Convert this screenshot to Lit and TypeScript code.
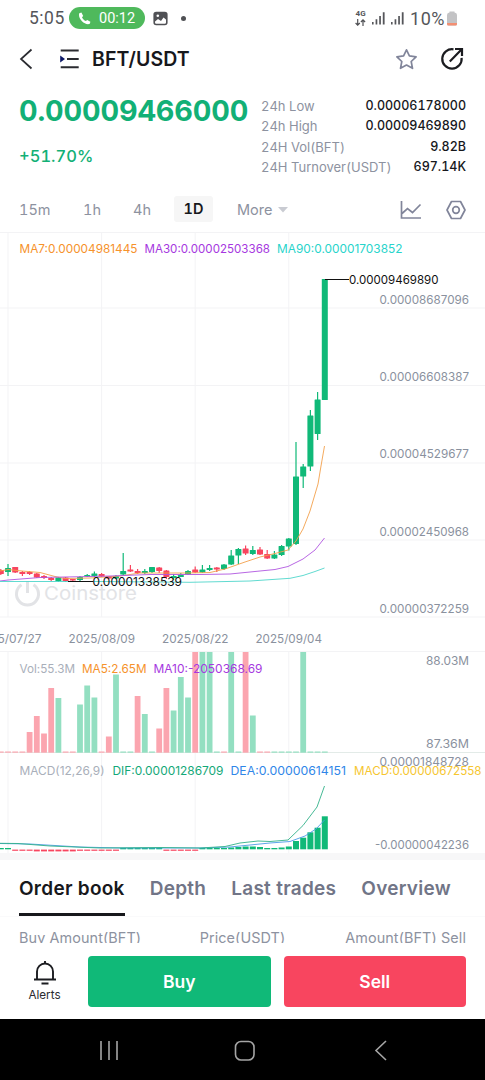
import { LitElement, html, svg, css } from "lit";
import { customElement } from "lit/decorators.js";

const UP = "#10b978";
const DOWN = "#f8455f";
const STEP = 7.2;
const cx = (k: number) => 8 + k * STEP;

type Candle = [up: number, high: number, top: number, bottom: number, low: number];

// One entry per day, the first one sits just left of the 07/27 grid line.
const candles: Candle[] = [
  [0, 569, 570, 574, 575], [1, 564, 568, 572, 576], [0, 567, 567, 572.5, 573], [0, 571, 572, 574, 576],
  [0, 571, 572, 574, 575], [0, 573, 573.5, 577.5, 578], [0, 575, 576, 578, 579], [0, 577, 578, 580, 581],
  [1, 577, 577.5, 581, 582], [0, 577, 577.5, 581, 582], [0, 579, 579, 580.5, 581], [1, 576, 577, 580, 581],
  [1, 574, 575, 576.5, 577], [1, 571.5, 573.5, 576, 577], [0, 573, 574, 576.5, 577], [0, 576, 576, 578.5, 579],
  [1, 575, 576, 578.5, 579], [1, 553, 571, 574.5, 575], [0, 565, 569.5, 571.5, 572], [0, 569, 571, 573, 574],
  [1, 569, 571, 573, 574], [1, 567, 567, 572, 573], [0, 567, 567.5, 571, 573], [0, 570, 570.5, 577, 579],
  [1, 574, 576, 578, 580], [1, 573, 575, 577, 577], [1, 570, 571, 574.5, 575], [0, 566.5, 569.5, 572.5, 573],
  [1, 565, 569.5, 572.5, 573], [1, 565, 568, 570, 571], [0, 567, 567.5, 569.5, 572], [1, 564, 564.5, 569, 570],
  [1, 550, 555.5, 564.5, 565], [1, 548, 549, 555.5, 564], [0, 545.5, 548.5, 553.5, 555], [1, 546, 550, 554, 555],
  [0, 547, 549.5, 554.5, 555], [0, 550, 554, 558.5, 559], [1, 551, 554.5, 558.5, 559], [1, 545, 546, 555, 556],
  [1, 538, 538.5, 546.5, 550.5], [1, 442, 476.5, 544, 545], [1, 464, 466.5, 476.5, 488], [1, 410, 415.5, 466.5, 471],
  [1, 392, 399.5, 434, 440], [1, 279, 279, 400, 400],
];

// Volume bar tops by day index.
const volumes: Record<number, number> = {
  3: 732, 4: 716, 5: 733.5, 6: 688, 7: 698, 10: 704.5, 11: 685.5, 12: 697.5, 14: 736.5, 15: 674.5,
  18: 696, 19: 714, 21: 728.5, 22: 688, 23: 710.5, 24: 677, 25: 697.5, 26: 652, 27: 652, 28: 652,
  31: 652, 33: 652, 34: 715.5, 41: 652,
};
const volumeDown = new Set([-1, 0, 1, 2, 3, 4, 5, 6, 8, 9, 13, 14, 18, 21, 22, 26, 30, 33, 35, 36]);

const macdTops: Record<number, number> = {
  31: 847.5, 32: 847, 33: 846.5, 34: 846.5, 35: 847, 36: 848, 37: 848, 38: 847.5, 39: 846.5,
  40: 841, 41: 837.7, 42: 832.3, 43: 827.7, 44: 816.3,
};

const ma7 = "0,571 8,569.5 22,571 40,572.5 55,576.5 65,578.5 90,578 120,576 140,573 165,573 188,573 210,572.5 225,569 245,562 260,557 275,553.5 288,550 296,541 303,529 310,511 318,484 321,466 324.5,446";
const ma30 = "0,581 8,580 40,577.5 90,576.5 110,576 150,574.5 200,574.5 230,574 250,572 275,569.5 288,566.5 303,559 315,550 324.5,538";
const ma90 = "0,581.5 100,581.5 190,582.3 250,581 290,578.3 303,575.5 315,571.5 324.5,568";
const dif = "0,843.3 18,843.5 50,846 100,848 160,847.5 200,848 225,846.5 240,843 258,841 270,841.5 288,840 303,825.5 317,807 324.5,786";
const dea = "0,843.5 30,844 80,847 120,848 160,848 200,848 230,847 250,845 270,843 290,841.5 305,836 316,829 324.5,820";

const label = (text: string, x: number, y: number, w: number, cls = "axis") =>
  svg`<text class=${cls} x=${x} y=${y} textLength=${w} lengthAdjust="spacingAndGlyphs">${text}</text>`;

const columns = (top: number, bottom: number) =>
  [0, 13, 26, 39].map((k) => svg`<line class="grid" x1=${cx(k)} x2=${cx(k)} y1=${top} y2=${bottom} />`);

@customElement("price-charts")
class PriceCharts extends LitElement {
  static styles = css`
    :host { display: flex; flex-direction: column; height: 621px; }
    svg { display: block; flex: none; }
    text { font-family: Inter, "Liberation Sans", sans-serif; font-size: 11.5px; }
    .grid { stroke: #f3f3f5; stroke-width: 1; }
    .axis { fill: #8a919e; }
    .mark { fill: #111; }
    .muted { fill: #a9afba; }
    .orange { fill: #f6922b; }
    .purple { fill: #a637e0; }
    .cyan { fill: #27d4cb; }
    .green { fill: #14a878; }
    .blue { fill: #2f86e8; }
    .yellow { fill: #f6c62f; }
    .brand { fill: #e2e3e6; font-size: 18.5px; font-weight: 400; }
    .curve { fill: none; stroke-width: 0.9; }
  `;

  private price() {
    return html`<svg width="485" height="419" viewBox="0 232 485 419">
      ${[232.5, 308, 385.5, 463, 540, 617].map((y) => svg`<line class="grid" x1="0" x2="485" y1=${y} y2=${y} />`)}
      ${columns(232, 617)}
      <g fill="none" stroke="#e2e3e6" stroke-width="3">
        <path d="M21.5 584.8A11 11 0 1 0 33.5 584.8M27.5 581V593" />
      </g>
      ${label("Coinstore", 44, 600, 93, "brand")}
      ${label("0.00008687096", 379.5, 304, 89.5)}
      ${label("0.00006608387", 379.5, 381, 89.5)}
      ${label("0.00004529677", 379.5, 458, 89.5)}
      ${label("0.00002450968", 379.5, 535.5, 89.5)}
      ${label("0.00000372259", 379.5, 612.5, 89.5)}
      ${candles.map(([up, high, top, bottom, low], i) => {
        const x = cx(i - 1);
        const c = up ? UP : DOWN;
        return svg`<rect x=${x - 0.6} y=${high} width="1.2" height=${low - high} fill=${c} />
          <rect x=${x - 3} y=${top} width="6" height=${bottom - top} rx="0.5" fill=${c} />`;
      })}
      <polyline class="curve" points=${ma7} stroke="#f3a04c" />
      <polyline class="curve" points=${ma30} stroke="#b056e0" />
      <polyline class="curve" points=${ma90} stroke="#4fd6cb" />
      <path d="M325 279.5H349M68 581.5H93" stroke="#111" stroke-width="1" />
      ${label("0.00009469890", 349, 284, 89.5, "mark")}
      ${label("0.00001338539", 92.5, 586, 89.5, "mark")}
      ${label("MA7:0.00004981445", 19.5, 253, 118, "orange")}
      ${label("MA30:0.00002503368", 144.5, 253, 125.5, "purple")}
      ${label("MA90:0.00001703852", 277, 253, 125.5, "cyan")}
      ${label("5/07/27", -2.5, 643, 44)}
      ${label("2025/08/09", 68.5, 643, 66.5)}
      ${label("2025/08/22", 162, 643, 66.5)}
      ${label("2025/09/04", 255.5, 643, 66.5)}
    </svg>`;
  }

  private volume() {
    return html`<svg width="485" height="102" viewBox="0 651 485 102">
      <line class="grid" x1="0" x2="485" y1="651.5" y2="651.5" />
      <line x1="0" x2="485" y1="752.5" y2="752.5" stroke="#e3ebe8" />
      ${columns(651, 753)}
      ${candles.map((_, i) => {
        const k = i - 1;
        const top = volumes[k] ?? 751.5;
        return svg`<rect x=${cx(k) - 2.9} y=${top} width="5.8" height=${752.7 - top} fill=${volumeDown.has(k) ? "#fba5af" : "#93dfc1"} />`;
      })}
      ${label("Vol:55.3M", 19.5, 673, 55.5, "muted")}
      ${label("MA5:2.65M", 82, 673, 64.5, "orange")}
      ${label("MA10:-2050368.69", 153.5, 673, 109, "purple")}
      ${label("88.03M", 426, 664.5, 43)}
      ${label("87.36M", 426, 748, 43)}
    </svg>`;
  }

  private macd() {
    return html`<svg width="485" height="100" viewBox="0 753 485 100">
      ${columns(753, 853)}
      ${candles.map((_, i) => {
        const k = i - 1;
        const down = (k > 0 && k < 16) || (k > 21 && k < 27);
        const top = down ? 849.6 : macdTops[k] ?? 848;
        const bottom = down ? (k > 3 && k < 10 ? 851.4 : 850.8) : 849.3;
        return svg`<rect x=${cx(k) - 3} y=${top} width="6" height=${bottom - top} fill=${down ? DOWN : UP} />`;
      })}
      <polyline class="curve" points=${dea} stroke="#4b9be6" />
      <polyline class="curve" points=${dif} stroke="#31b189" />
      ${label("0.00001848728", 379.5, 766, 89.5)}
      ${label("-0.00000042236", 375, 849, 94)}
      ${label("MACD(12,26,9)", 19.5, 774.5, 85, "muted")}
      ${label("DIF:0.00001286709", 112.5, 774.5, 111, "green")}
      ${label("DEA:0.00000614151", 230.5, 774.5, 115.5, "blue")}
      ${label("MACD:0.00000672558", 354, 774.5, 127.5, "yellow")}
    </svg>`;
  }

  render() {
    return [this.price(), this.volume(), this.macd()];
  }
}

@customElement("app-root")
class AppRoot extends LitElement {
  static styles = css`
    :host {
      display: flex; flex-direction: column; width: 485px; height: 1080px; overflow: hidden;
      background: #fff; color: #17181c; font-family: Inter, "Liberation Sans", sans-serif;
    }
    * { box-sizing: border-box; }
    svg { display: block; flex: none; }
    .row { display: flex; align-items: center; flex: none; }
    .grow { flex: 1; }
    .status { height: 36px; padding: 0 28px 0 29px; color: #55565a; font-family: Roboto, sans-serif; font-size: 17.5px; }
    .clock { width: 40px; letter-spacing: 0.5px; }
    .call { width: 76px; height: 22px; border-radius: 11px; background: #4fb95c; color: #fff; padding-left: 9px; gap: 8px; font-size: 14.5px; }
    .picture { margin-left: 8px; }
    .dot { width: 5px; height: 5px; border-radius: 50%; background: #505155; margin-left: 13px; }
    .net { font: 700 8px/8px Roboto, sans-serif; display: flex; flex-direction: column; align-items: center; gap: 1px; margin-right: 6px; }
    .bars { margin-right: 6px; }
    .pct { font-size: 18px; letter-spacing: 0.5px; margin: 0 2px 0 0; }
    .head { height: 46px; padding: 0 21px 0 19px; }
    .pair { font-size: 19.5px; font-weight: 600; margin-left: 12px; letter-spacing: 0.1px; }
    .star { margin-right: 22px; }
    .list { margin-left: 27px; }
    .summary { display: flex; flex: none; height: 106px; padding: 13px 19px 0; justify-content: space-between; font-variant-numeric: tabular-nums; }
    .last { font-size: 28.8px; line-height: 31px; font-weight: 700; color: #12b076; letter-spacing: -0.15px; }
    .change { margin-top: 20px; font-size: 16.5px; line-height: 20px; color: #12b076; font-weight: 500; }
    .stats { width: 205px; font-size: 13px; padding-top: 1px; }
    .stat { display: flex; justify-content: space-between; line-height: 20.3px; color: #8d92a0; white-space: nowrap; }
    .value { color: #17181c; font-weight: 500; font-size: 12.5px; }
    .intervals { height: 44px; padding: 0 19px 2px; font-size: 14.5px; color: #8d92a0; font-variant-numeric: tabular-nums; }
    .intervals svg { position: relative; top: 1px; }
    .interval { width: 64px; }
    .hour { width: 50px; }
    .four { width: 41px; }
    .day { width: 39px; height: 26px; border-radius: 3px; background: #f6f6f6; color: #17181c; font-weight: 600; text-align: center; line-height: 26px; margin-right: 24px; }
    .more { margin-right: 5px; width: 36px; }
    .settings { margin-left: 24px; }
    .band { height: 7px; background: #f7f7f8; flex: none; }
    .tabs { height: 57px; padding: 0 19px; gap: 25px; align-items: stretch; border-bottom: 1px solid #fafafb; }
    .tab { font-size: 19px; line-height: 58px; font-weight: 600; color: #717587; white-space: nowrap; letter-spacing: 0.27px; }
    .active { color: #17181c; height: 56px; background: linear-gradient(#17181c, #17181c) 0 100% / 100% 3.5px no-repeat; }
    .columns { display: grid; grid-template-columns: 1fr auto 1fr; height: 26px; padding: 10px 19px 0; font-size: 14.4px; line-height: 22px; color: #8d92a0; overflow: hidden; white-space: nowrap; flex: none; letter-spacing: 0.1px; }
    .right { text-align: right; }
    .actions { height: 76px; padding: 13px 19px 12px; background: #fff; gap: 13px; }
    .alerts { width: 51px; display: flex; flex-direction: column; align-items: center; gap: 3px; font-size: 11.7px; line-height: 14px; color: #2a2b30; flex: none; margin-right: 5px; padding-bottom: 2px; }
    .action { flex: 1; height: 51px; border-radius: 4px; color: #fff; font-size: 17.5px; font-weight: 600; line-height: 52px; text-align: center; }
    .buy { background: #10b978; }
    .sell { background: #f8455f; }
    .nav { flex: 1; background: #000; }
    .nav svg { width: 485px; height: 61px; }
  `;

  private signal() {
    return html`<svg class="bars" width="13" height="14" viewBox="0 0 13 14" fill="#55565a">
      <path d="M0 11h1.6v2.4H0zM3.6 8.3h1.7v5.1H3.6zM7.2 5h1.7v8.4H7.2zM10.8 1.2h1.8v12.2h-1.8z" />
    </svg>`;
  }

  private stat(name: string, value: string) {
    return html`<div class="stat"><span>${name}</span><span class="value">${value}</span></div>`;
  }

  render() {
    return html`
      <div class="row status">
        <span class="clock">5:05</span>
        <div class="row call">
          <svg width="13" height="13" viewBox="0 0 13 13"><path d="M1.3 1.2 3.4.6 5.2 4 4 5.2C4.8 7 6 8.200 7.900 9.100L9.200 7.900 12.400 9.700 11.800 11.800C7 13.800-.6 6.500 1.300 1.200Z" fill="#fff" /></svg>
          <span>00:12</span>
        </div>
        <svg class="picture" width="15" height="15" viewBox="0 0 15 15">
          <rect x="1.200" y="1.500" width="12.600" height="12" rx="2" fill="none" stroke="#505155" stroke-width="1.600" />
          <path d="M1.500 2h12v7L10.500 6.500 8 10 5 8 1.500 11z" fill="#505155" /><circle cx="4.800" cy="4.800" r="1.300" fill="#fff" />
        </svg>
        <span class="dot"></span>
        <span class="grow"></span>
        <div class="net"><span>4G</span>
          <svg width="11" height="7" viewBox="0 0 11 7" fill="none" stroke="#505155" stroke-width="1.200"><path d="M2.700 0v6M.6 4l2.100 2.100L4.800 4M8 7V1M5.900 3 8 .900 10.100 3" /></svg>
        </div>
        ${this.signal()}${this.signal()}
        <span class="pct">10%</span>
        <svg width="10" height="15" viewBox="0 0 10 15"><path d="M2.500 1.500V.5h5v1Q10 1.700 10 4v9q0 1.500-1.500 1.500h-7Q0 14.500 0 13V4Q0 1.700 2.500 1.500Z" fill="#c3c3c5" /><path d="M0 12h10v1q0 1.500-1.500 1.500h-7Q0 14.500 0 13z" fill="#f38f72" /></svg>
      </div>

      <div class="row head">
        <svg width="14" height="22" viewBox="0 0 14 22"><path d="M12.500 1.500 2 11l10.500 9.500" fill="none" stroke="#2a2b30" stroke-width="1.700" /></svg>
        <svg class="list" width="20" height="20" viewBox="0 0 20 20"><path d="M.7 1.500h18M7 10h11.700M.7 18.200h18" stroke="#2a2b30" stroke-width="2" /><path d="M.2 6.500 5 10 .2 13.500z" fill="#0b1766" /></svg>
        <span class="pair">BFT/USDT</span>
        <span class="grow"></span>
        <svg class="star" width="23" height="23" viewBox="0 0 23 23"><path d="m11.500 1.800 2.900 6.100 6.700.9-4.900 4.700 1.300 6.800-6-3.200-6 3.200 1.300-6.800L1.900 8.800l6.700-.9z" fill="none" stroke="#81859a" stroke-width="1.700" stroke-linejoin="round" /></svg>
        <svg width="24" height="24" viewBox="0 0 24 24"><path d="M13.500 2.300A9.700 9.700 0 1 0 21.600 10.800M9.800 14.400 21 2.900" fill="none" stroke="#1b1c20" stroke-width="2.200" /><path d="M15 2h7v7" fill="none" stroke="#1b1c20" stroke-width="2.200" /></svg>
      </div>

      <div class="summary">
        <div><div class="last">0.00009466000</div><div class="change">+51.70%</div></div>
        <div class="stats">
          ${this.stat("24h Low", "0.00006178000")}
          ${this.stat("24h High", "0.00009469890")}
          ${this.stat("24H Vol(BFT)", "9.82B")}
          ${this.stat("24H Turnover(USDT)", "697.14K")}
        </div>
      </div>

      <div class="row intervals">
        <span class="interval">15m</span><span class="hour">1h</span><span class="four">4h</span>
        <span class="day">1D</span><span class="more">More</span>
        <svg width="10" height="6" viewBox="0 0 10 6"><path d="M0 0h10L5 5.500z" fill="#c9cbd2" /></svg>
        <span class="grow"></span>
        <svg width="22" height="20" viewBox="0 0 22 20" fill="none" stroke="#81859a" stroke-width="1.700"><path d="M1.500 1v17H21M2 13.500 7.500 8.500l5 4L20.500 4.500" /></svg>
        <svg class="settings" width="20" height="20" viewBox="0 0 20 20" fill="none" stroke="#81859a" stroke-width="1.700" stroke-linejoin="round"><path d="M5.500 1.500h9L19 10l-4.500 8.500h-9L1 10z" /><circle cx="10" cy="10" r="3.300" /></svg>
      </div>

      <price-charts></price-charts>
      <div class="band"></div>

      <div class="row tabs">
        <span class="tab active">Order book</span><span class="tab">Depth</span>
        <span class="tab">Last trades</span><span class="tab">Overview</span>
      </div>
      <div class="columns"><span>Buy Amount(BFT)</span><span>Price(USDT)</span><span class="right">Amount(BFT) Sell</span></div>

      <div class="row actions">
        <div class="alerts">
          <svg width="24" height="25" viewBox="0 0 24 25" fill="none" stroke="#1b1c20" stroke-width="1.900"><path d="M1 19.500h22M4 19V11.500a8 8 0 0 1 16 0V19M12 3.500V1M8.500 23.500h7" /></svg>
          <span>Alerts</span>
        </div>
        <div class="action buy">Buy</div>
        <div class="action sell">Sell</div>
      </div>

      <div class="nav">
        <svg viewBox="0 0 485 61" fill="none" stroke="#a5a5a5" stroke-width="1.600">
          <path d="M101 22v19M109 22v19M117 22v19M386 22l-10 9.500 10 9.500" />
          <rect x="235.500" y="22.500" width="18.500" height="18.500" rx="5.500" />
        </svg>
      </div>
    `;
  }
}
